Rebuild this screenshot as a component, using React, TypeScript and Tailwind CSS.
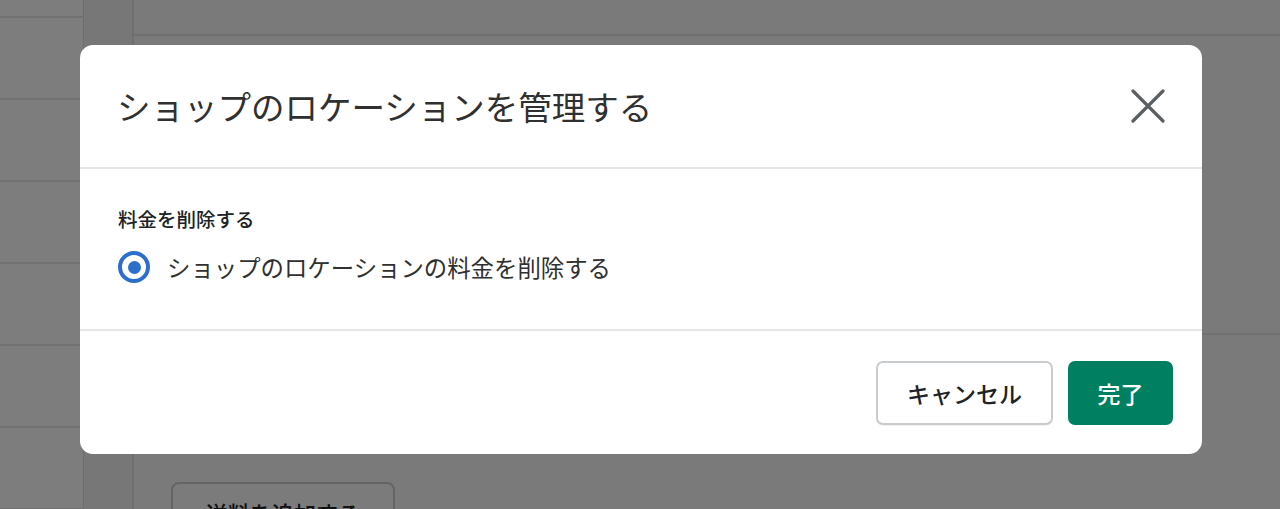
import React from "react";

const font = { fontFamily: '"Noto Sans CJK JP", "Noto Sans", sans-serif' };

function CloseIcon() {
  return (
    <svg width="34" height="34" viewBox="0 0 34 34" fill="none">
      <path d="M2 2L32 32M32 2L2 32" stroke="#5c5f62" strokeWidth="3.2" strokeLinecap="round" />
    </svg>
  );
}

export default function App() {
  const rows = [18, 82, 82, 82, 82, 82, 82];
  return (
    <div className="relative h-[509px] w-[1280px] overflow-hidden bg-white" style={font}>
      {/* underlying page */}
      <div className="flex h-full w-full">
        <div className="flex w-[84px] flex-col border-r border-[#dcdcdc] bg-[#fbfbfb]">
          {rows.map((h, i) => (
            <div key={i} style={{ height: h }} className="shrink-0 border-b-2 border-[#e2e2e2]" />
          ))}
        </div>
        <div className="w-[50px] border-r-2 border-[#dedede] bg-[#efefef]" />
        <div className="flex flex-1 flex-col bg-[#f4f4f4]">
          <div className="h-[36px] shrink-0 border-b-2 border-[#e0e0e0]" />
          <div className="h-[299px] shrink-0 border-b-2 border-[#e0e0e0]" />
          <div className="pl-[37px] pt-[147px]">
            <div className="flex h-[64px] w-[224px] items-start justify-center rounded-[8px] border-2 border-[#c8c8c8] bg-[#f6f6f6] pt-[12px] text-[22px] font-medium text-[#202223]">
              送料を追加する
            </div>
          </div>
        </div>
      </div>
      {/* overlay */}
      <div className="absolute inset-0 bg-[rgba(0,0,0,0.5)]" />
      {/* modal */}
      <div className="absolute left-[80px] top-[45px] flex w-[1122px] flex-col overflow-hidden rounded-[13px] bg-white">
        <div className="flex h-[124px] items-center justify-between border-b-2 border-[#e4e5e7] pl-[37px] pr-[37px]">
          <h1 className="text-[33.5px] font-normal leading-none text-[#303030]">
            ショップのロケーションを管理する
          </h1>
          <CloseIcon />
        </div>
        <div className="flex h-[160px] flex-col px-[38px] pt-[36px]">
          <div className="text-[19.5px] font-medium leading-[28px] text-[#202223]">料金を削除する</div>
          <div className="mt-[18px] flex items-center gap-[17px]">
            <span className="flex h-[32px] w-[32px] items-center justify-center rounded-full border-[4px] border-[#2c6ecb] bg-white">
              <span className="h-[13px] w-[13px] rounded-full bg-[#2c6ecb]" />
            </span>
            <span className="text-[23.4px] font-normal leading-[32px] text-[#303030]">
              ショップのロケーションの料金を削除する
            </span>
          </div>
        </div>
        <div className="flex justify-end gap-[15px] border-t-2 border-[#e4e5e7] pb-[29px] pr-[29px] pt-[30px]">
          <button className="flex h-[64px] w-[177px] items-center justify-center rounded-[7px] border-2 border-[#c9cccf] bg-white text-[23px] font-medium text-[#202223] shadow-[0_1px_0_rgba(0,0,0,0.05)]">
            キャンセル
          </button>
          <button className="flex h-[64px] w-[105px] items-center justify-center rounded-[7px] bg-[#008060] text-[23px] font-medium text-white">
            完了
          </button>
        </div>
      </div>
    </div>
  );
}
